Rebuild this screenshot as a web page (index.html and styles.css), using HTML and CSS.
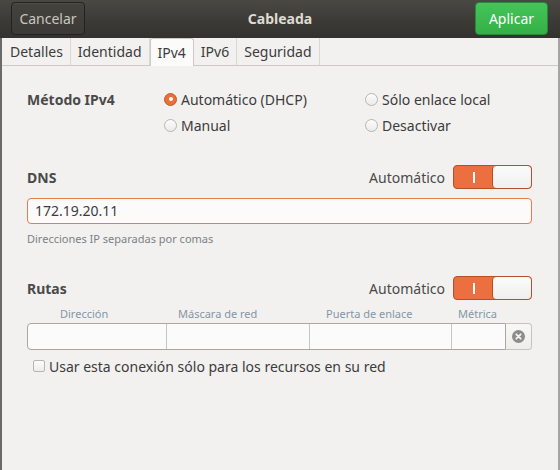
FILE: index.html
```html
<!DOCTYPE html>
<html lang="es">
<head>
<meta charset="utf-8">
<title>Cableada</title>
<link rel="stylesheet" href="styles.css">
</head>
<body>
<div class="app">
  <header class="headerbar">
    <button class="hb-btn cancel">Cancelar</button>
    <div class="title">Cableada</div>
    <button class="hb-btn apply">Aplicar</button>
  </header>
  <div class="main">
    <nav class="tabs">
      <div class="tab">Detalles</div>
      <div class="tab">Identidad</div>
      <div class="tab active">IPv4</div>
      <div class="tab">IPv6</div>
      <div class="tab">Seguridad</div>
    </nav>
    <div class="content">
      <div class="method">
        <div class="label">Método IPv4</div>
        <label class="radio"><span class="rb checked"></span>Automático (DHCP)</label>
        <label class="radio"><span class="rb"></span>Sólo enlace local</label>
        <div></div>
        <label class="radio"><span class="rb"></span>Manual</label>
        <label class="radio"><span class="rb"></span>Desactivar</label>
      </div>

      <div class="sec-head dns-head">
        <div class="label">DNS</div>
        <div class="auto">Automático</div>
        <div class="switch"><span class="on-mark"></span><span class="knob"></span></div>
      </div>
      <div class="entry">172.19.20.11</div>
      <div class="hint">Direcciones IP separadas por comas</div>

      <div class="sec-head routes-head">
        <div class="label">Rutas</div>
        <div class="auto">Automático</div>
        <div class="switch"><span class="on-mark"></span><span class="knob"></span></div>
      </div>
      <div class="cols">
        <div class="col h1">Dirección</div>
        <div class="col h2">Máscara de red</div>
        <div class="col h3">Puerta de enlace</div>
        <div class="col h4">Métrica</div>
      </div>
      <div class="route-row">
        <div class="cells">
          <div class="cell c1"></div>
          <div class="cell c2"></div>
          <div class="cell c3"></div>
          <div class="cell c4"></div>
        </div>
        <div class="del">
          <svg width="13" height="13" viewBox="0 0 13 13"><circle cx="6.5" cy="6.5" r="6.5" fill="#8c8c8c"/><path d="M4.3 4.3 L8.7 8.7 M8.7 4.3 L4.3 8.7" stroke="#f4f4f4" stroke-width="1.8" stroke-linecap="round"/></svg>
        </div>
      </div>
      <label class="check"><span class="cb"></span>Usar esta conexión sólo para los recursos en su red</label>
    </div>
  </div>
</div>
</body>
</html>
```

FILE: styles.css
```css
* { box-sizing: border-box; }
html, body { margin: 0; padding: 0; }
body {
  width: 560px;
  height: 470px;
  overflow: hidden;
  background: #f2f1f0;
  font-family: "Noto Sans", "Open Sans", sans-serif;
  font-size: 14px;
  color: #3c3c3c;
}
.app { width: 560px; height: 470px; display: flex; flex-direction: column; }

.headerbar {
  height: 38px;
  flex: none;
  background: linear-gradient(#4a4843, #3a3935 60%, #33322e);
  display: flex;
  align-items: flex-start;
  padding: 2px 12px 0 11px;
}
.hb-btn {
  font-family: inherit;
  font-size: 14px;
  height: 33px;
  border-radius: 4px;
  padding: 0;
  line-height: 31px;
}
.cancel {
  width: 74px;
  color: #c9c6c0;
  background: linear-gradient(#45433e, #3b3a36);
  border: 1px solid #232220;
  box-shadow: inset 0 1px 0 rgba(255,255,255,0.06);
}
.apply {
  width: 73px;
  color: #fff;
  background: linear-gradient(#44c559, #34b046);
  border: 1px solid #2a8a36;
}
.title {
  flex: 1;
  text-align: center;
  font-weight: bold;
  color: #dfdbd2;
  line-height: 33px;
}

.main {
  flex: 1;
  border-left: 2px solid #6b6a68;
  border-right: 2px solid #a7a5a2;
  display: flex;
  flex-direction: column;
}
.tabs {
  height: 28px;
  flex: none;
  display: flex;
  align-items: flex-end;
  padding-left: 1px;
  border-bottom: 1px solid #cdc9c5;
}
.tab {
  height: 27px;
  line-height: 28px;
  padding: 0 7px;
  color: #3c3c3c;
  border-right: 1px solid #dbd7d3;
}
.tab.active {
  background: #fbfbfa;
  border: 1px solid #cdc9c5;
  border-bottom: none;
  border-radius: 3px 3px 0 0;
  height: 28px;
  margin-bottom: -1px;
  padding: 0 7px;
}

.content {
  padding: 20px 26px 0 25px;
  display: flex;
  flex-direction: column;
}
.label { font-weight: bold; color: #4a4a4a; }

.method {
  display: grid;
  grid-template-columns: 137px 201px auto;
  grid-auto-rows: 26px;
  align-items: center;
}
.radio { display: flex; align-items: center; color: #3c3c3c; }
.rb {
  width: 13px; height: 13px;
  border-radius: 50%;
  border: 1px solid #b9b5b1;
  background: linear-gradient(#fcfcfc, #ebebeb);
  margin-right: 4px;
  flex: none;
  position: relative;
}
.rb.checked {
  background: #e8703b;
  border-color: #c55a2b;
}
.rb.checked::after {
  content: "";
  position: absolute;
  left: 3.5px; top: 3.5px;
  width: 4px; height: 4px;
  border-radius: 50%;
  background: #fff;
}

.sec-head {
  display: flex;
  align-items: center;
  height: 24px;
}
.sec-head .label { flex: 1; }
.auto { color: #4a4a4a; margin-right: 8px; }
.dns-head { margin-top: 27px; }
.routes-head { margin-top: 30px; }

.switch {
  width: 79px; height: 24px;
  border-radius: 4px;
  background: #ec6f3f;
  border: 1px solid #b2502a;
  position: relative;
  display: flex;
  justify-content: flex-end;
}
.on-mark {
  position: absolute;
  left: 19px; top: 6px;
  width: 2px; height: 11px;
  background: #fff;
}
.knob {
  width: 39px; height: 22px;
  border-radius: 4px;
  background: linear-gradient(#fbfbfb, #efefee);
  border-left: 1px solid #b2502a;
}

.entry {
  margin-top: 9px;
  height: 26px;
  border: 1px solid #ec7a4d;
  border-radius: 4px;
  background: #fbfbfb;
  padding-left: 7px;
  line-height: 24px;
  color: #3c3c3c;
}
.hint {
  margin-top: 8px;
  font-size: 11px;
  line-height: 14px;
  color: #7b8186;
}

.cols {
  display: flex;
  margin-top: 7px;
  height: 14px;
  font-size: 11px;
  line-height: 14px;
  color: #8496a6;
  white-space: nowrap;
}
.col { text-align: left; }
.h1 { width: 151px; padding-left: 33px; }
.h2 { width: 148px; }
.h3 { width: 132px; }
.h4 { width: 50px; }

.route-row {
  display: flex;
  margin-top: 2px;
  height: 27px;
}
.cells {
  display: flex;
  border: 1px solid #aaa7a3;
  border-radius: 4px 0 0 4px;
  background: #fbfbfb;
  overflow: hidden;
}
.cell { height: 25px; border-right: 1px solid #c9c6c2; }
.c1 { width: 139px; }
.c2 { width: 143px; }
.c3 { width: 142px; }
.c4 { width: 53px; border-right: none; }
.del {
  width: 26px;
  height: 27px;
  border: 1px solid #c6c2be;
  border-left: none;
  border-radius: 0 4px 4px 0;
  background: linear-gradient(#f8f8f7, #eeedec);
  display: flex;
  align-items: center;
  justify-content: center;
}

.check {
  margin-top: 6px;
  height: 20px;
  display: flex;
  align-items: center;
  padding-left: 6px;
  color: #3c3c3c;
}
.cb {
  width: 12px; height: 12px;
  border: 1px solid #b9b5b1;
  border-radius: 2px;
  background: linear-gradient(#fcfcfc, #ececec);
  margin-right: 4px;
  flex: none;
}
```
